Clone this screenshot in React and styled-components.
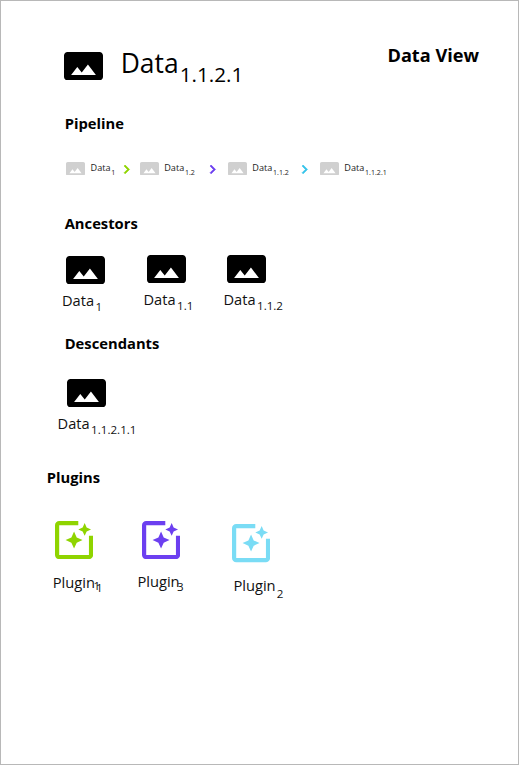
import React from 'react';
import styled, { createGlobalStyle } from 'styled-components';

const GlobalStyle = createGlobalStyle`
  body { margin: 0; background: #fff; }
`;

const Page = styled.main`
  box-sizing: border-box;
  width: 519px;
  height: 765px;
  border: 1px solid #b8b8b8;
  background: #fff;
  color: #000;
  font-family: "Open Sans", "Noto Sans", sans-serif;
  white-space: nowrap;
  overflow: hidden;
  display: grid;
  grid-template-rows: 112px 100px 120px 134px 1fr;
`;

const Header = styled.header`
  display: flex;
  align-items: flex-start;
  padding: 0 39px 0 63px;
`;

const HeaderIcon = styled.div`
  margin-top: 50.7px;
  width: 56.7px;
`;

const HeaderLabel = styled.div`
  margin-top: 42px;
`;

const ViewName = styled.h1`
  margin: 44px 0 0 auto;
  font-size: 18.15px;
  line-height: 20px;
  font-weight: 700;
`;

const Section = styled.section`
  padding-left: ${(p) => p.$inset}px;
`;

const Title = styled.h2`
  margin: 0;
  font-size: 14.75px;
  line-height: 20px;
  font-weight: 700;
`;

const Label = styled.div`
  display: flex;
  align-items: flex-start;
  color: ${(p) => p.$color || '#111'};
  font-size: ${(p) => p.$size}px;
  line-height: ${(p) => p.$line}px;
`;

const Sub = styled.span`
  font-size: ${(p) => p.$size}px;
  margin: ${(p) => p.$drop}px 0 0 ${(p) => p.$gap}px;
`;

const Steps = styled.div`
  display: flex;
  margin: 28.6px 0 0 1.7px;
`;

const Step = styled.div`
  display: flex;
  align-items: flex-start;
  width: ${(p) => p.$width}px;
`;

const StepBody = styled.div`
  display: flex;
  width: ${(p) => p.$width}px;
`;

const StepLabel = styled.div`
  margin: -1px 0 0 5.2px;
`;

const Arrow = styled.svg`
  display: block;
  width: 5.6px;
  height: 8.8px;
  margin: 3.8px 0 0 auto;
  fill: ${(p) => p.$color};
  stroke: ${(p) => p.$color};
  stroke-width: 0.9;
  overflow: visible;
`;

const Tiles = styled.div`
  display: grid;
  grid-template-columns: ${(p) => p.$columns};
  margin-left: ${(p) => p.$shift}px;
`;

const Tile = styled.div`
  padding-top: ${(p) => p.$top}px;
`;

const TileIcon = styled.div`
  margin-left: ${(p) => p.$inset}px;
  height: ${(p) => p.$height}px;
`;

const Panorama = styled.svg`
  display: block;
  flex: none;
  width: ${(p) => p.$width}px;
  height: ${(p) => (p.$width * 16) / 22}px;
  fill: ${(p) => p.$color || '#000'};
`;

const Filter = styled.svg`
  display: block;
  width: 38.2px;
  height: 38.2px;
  fill: ${(p) => p.$color};
`;

const DataIcon = ({ width, color }) => (
  <Panorama $width={width} $color={color} viewBox="1 4 22 16">
    <path d="M23 18V6c0-1.1-.9-2-2-2H3c-1.1 0-2 .9-2 2v12c0 1.1.9 2 2 2h18c1.1 0 2-.9 2-2zM8.5 12.5l2.5 3.01L14.5 11l4.5 6H5l3.5-4.5z" />
  </Panorama>
);

const PluginIcon = ({ color }) => (
  <Filter $color={color} viewBox="3.02 3 18 18">
    <path d="M19.02 10v9H5V5h9V3H5.02c-1.1 0-2 .9-2 2v14c0 1.1.9 2 2 2H19c1.1 0 2-.9 2-2v-9h-1.98zM17 10l.94-2.06L20 7l-2.06-.94L17 4l-.94 2.06L14 7l2.06.94L17 10zm-3.75.75L12 8l-1.25 2.75L8 12l2.75 1.25L12 16l1.25-2.75L16 12l-2.75-1.25z" />
  </Filter>
);

const steps = [
  { id: '1', width: 73.7, arrow: '#8fd400', pad: 62.8 },
  { id: '1.2', width: 88.1, arrow: '#6c3ff0', pad: 75.4 },
  { id: '1.1.2', width: 92, arrow: '#35c4ea', pad: 79.2 },
  { id: '1.1.2.1', width: 90 },
];

const DataTile = ({ id, top, inset }) => (
  <Tile $top={top}>
    <TileIcon $inset={inset} $height={34.5}>
      <DataIcon width={39} />
    </TileIcon>
    <Label $size={14.6} $line={20}>
      Data
      <Sub $size={11.6} $drop={7} $gap={1.5}>{id}</Sub>
    </Label>
  </Tile>
);

const PluginTile = ({ color, top, inset, height, children }) => (
  <Tile $top={top}>
    <TileIcon $inset={inset} $height={height}>
      <PluginIcon color={color} />
    </TileIcon>
    <Label $size={14.7} $line={20}>
      Plugin
      {children}
    </Label>
  </Tile>
);

export default function App() {
  return (
    <>
      <GlobalStyle />
      <Page>
        <Header>
          <HeaderIcon>
            <DataIcon width={39} />
          </HeaderIcon>
          <HeaderLabel>
            <Label $size={26.4} $line={40} $color="#000">
              Data
              <Sub $size={20.7} $drop={11} $gap={1.1}>1.1.2.1</Sub>
            </Label>
          </HeaderLabel>
          <ViewName>Data View</ViewName>
        </Header>

        <Section $inset={63.7}>
          <Title>Pipeline</Title>
          <Steps>
            {steps.map((s) => (
              <Step key={s.id} $width={s.width}>
                <StepBody $width={s.pad || s.width}>
                  <DataIcon width={19} color="#d0d0d0" />
                  <StepLabel>
                    <Label $size={9.1} $line={14} $color="#222">
                      Data
                      <Sub $size={7.1} $drop={4} $gap={0.7}>{s.id}</Sub>
                    </Label>
                  </StepLabel>
                  {s.arrow && (
                    <Arrow $color={s.arrow} viewBox="8.59 6 7.41 12">
                      <path d="M10 6L8.59 7.41 13.17 12l-4.58 4.59L10 18l6-6z" />
                    </Arrow>
                  )}
                </StepBody>
              </Step>
            ))}
          </Steps>
        </Section>

        <Section $inset={63.7}>
          <Title>Ancestors</Title>
          <Tiles $columns="81.5px 80px 1fr" $shift={-2.7}>
            <DataTile id="1" top={22.7} inset={3.6} />
            <DataTile id="1.1" top={21.6} inset={3.7} />
            <DataTile id="1.1.2" top={21.6} inset={3.7} />
          </Tiles>
        </Section>

        <Section $inset={63.7}>
          <Title>Descendants</Title>
          <Tiles $columns="1fr" $shift={-7.1}>
            <DataTile id="1.1.2.1.1" top={25.6} inset={9.7} />
          </Tiles>
        </Section>

        <Section $inset={45.7}>
          <Title>Plugins</Title>
          <Tiles $columns="84.7px 96px 1fr" $shift={6}>
            <PluginTile color="#8fd400" top={34.2} inset={2.1} height={51.2}>
              <Sub $size={11.6} $drop={4} $gap={-1.5}>1</Sub>
              <Sub $size={11.6} $drop={6} $gap={-4}>1</Sub>
            </PluginTile>
            <PluginTile color="#6c3ff0" top={34.2} inset={4.5} height={50.2}>
              <Sub $size={11.6} $drop={6} $gap={-2.6}>3</Sub>
            </PluginTile>
            <PluginTile color="#7adcf5" top={37.4} inset={-1.8} height={51}>
              <Sub $size={11.6} $drop={9} $gap={1.2}>2</Sub>
            </PluginTile>
          </Tiles>
        </Section>
      </Page>
    </>
  );
}
